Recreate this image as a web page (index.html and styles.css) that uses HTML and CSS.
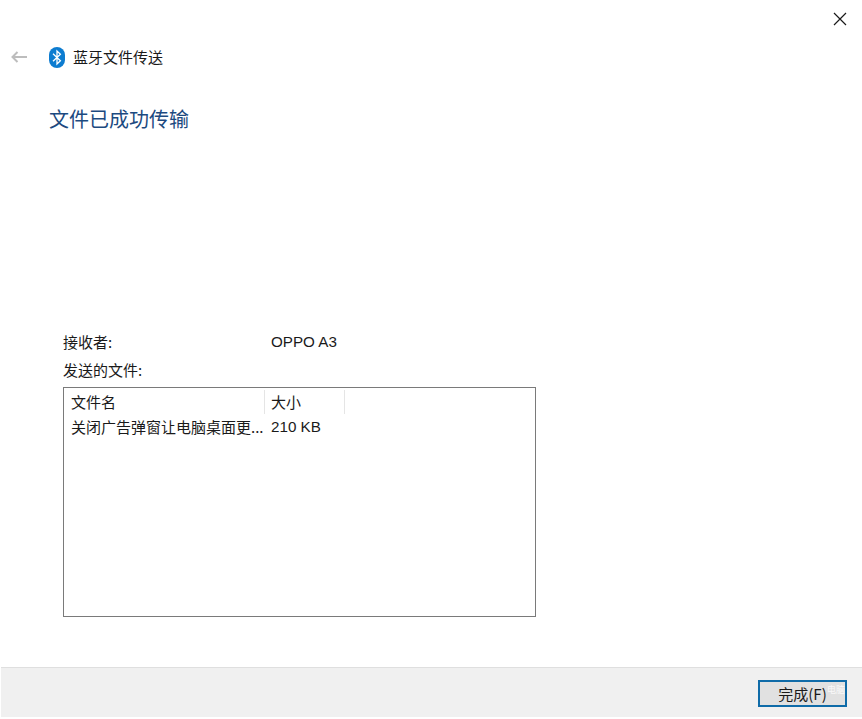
FILE: index.html
```html
<!DOCTYPE html>
<html lang="zh-CN">
<head>
<meta charset="utf-8">
<title>蓝牙文件传送</title>
<link rel="stylesheet" href="styles.css">
</head>
<body>
<div class="window">
  <div class="close-row">
    <svg class="close" width="14" height="14" viewBox="0 0 14 14"><path d="M1 1L13 13M13 1L1 13" stroke="#1a1a1a" stroke-width="1.2" fill="none"/></svg>
  </div>
  <header class="titlebar">
    <svg class="back" width="16" height="12" viewBox="0 0 16 12"><path d="M6.5 1L1.5 6L6.5 11M1.5 6H16" stroke="#bdbdbd" stroke-width="2" fill="none"/></svg>
    <svg class="bt" width="16" height="21" viewBox="0 0 16 21"><rect x="0" y="0" width="16" height="21" rx="8" fill="#0d7cd0"/><path d="M4 6.8L11.4 13.8L8 17V4L11.4 7.2L4 14.2" stroke="#fff" stroke-width="1.3" fill="none"/></svg>
    <span class="app-title">蓝牙文件传送</span>
  </header>
  <h1 class="heading">文件已成功传输</h1>
  <main class="details">
    <div class="row-recipient">
      <span class="label">接收者:</span>
      <span class="value">OPPO A3</span>
    </div>
    <div class="label sent">发送的文件:</div>
    <div class="listbox">
      <div class="list-head">
        <span class="col-name">文件名</span>
        <span class="col-size">大小</span>
      </div>
      <div class="list-row">
        <span class="col-name">关闭广告弹窗让电脑桌面更...</span>
        <span class="col-size">210 KB</span>
      </div>
    </div>
  </main>
  <footer class="footer">
    <button class="finish"><span class="finish-text">完成(F)</span><span class="mark">电脑</span></button>
  </footer>
</div>
</body>
</html>
```
FILE: styles.css
```css
html, body { margin: 0; padding: 0; background: #fff; }
body { width: 862px; height: 719px; overflow: hidden; font-family: "Noto Sans CJK SC", "Liberation Sans", sans-serif; color: #1a1a1a; }
.window { display: flex; flex-direction: column; height: 719px; }
.close-row { display: flex; justify-content: flex-end; padding: 12px 15px 0 0; height: 14px; }
.titlebar { display: flex; align-items: center; height: 22px; margin-top: 20px; padding-left: 11px; }
.back { margin-right: 22px; }
.bt { margin-right: 8px; }
.app-title { font-size: 15px; line-height: 22px; }
.heading { margin: 36px 0 0 49px; font-size: 20px; font-weight: 400; line-height: 30px; color: #1c4a80; }
.details { margin: 197px 0 0 63px; font-size: 15px; }
.row-recipient { display: flex; height: 22px; line-height: 22px; }
.row-recipient .label { width: 208px; }
.value, .col-size { font-family: "Liberation Sans", "Noto Sans CJK SC", sans-serif; font-size: 15.2px; }
.sent { margin-top: 6px; height: 22px; line-height: 22px; }
.listbox { box-sizing: border-box; width: 473px; height: 230px; margin-top: 6px; border: 1px solid #7a7a7a; }
.list-head, .list-row { display: flex; line-height: 24px; height: 24px; }
.list-head { margin-top: 2px; }
.list-row { margin-top: 1px; }
.col-name { box-sizing: border-box; width: 201px; padding-left: 7px; white-space: nowrap; }
.col-size { box-sizing: border-box; width: 80px; padding-left: 6px; }
.list-head .col-name, .list-head .col-size { border-right: 1px solid #e5e5e5; }
.list-head .col-size { font-family: "Noto Sans CJK SC", sans-serif; font-size: 15px; }
.footer { box-sizing: border-box; display: flex; justify-content: flex-end; align-items: flex-start; margin-top: 50px; margin-left: 1px; height: 50px; background: #f0f0f0; border-top: 1px solid #dfdfdf; padding: 12px 15px 0 0; }
.finish { position: relative; box-sizing: border-box; width: 89px; height: 27px; padding: 0; background: #e1e1e1; border: 2px solid #0f6ba8; font-family: "Noto Sans CJK SC", sans-serif; font-size: 15px; line-height: 22px; color: #1a1a1a; }
.mark { position: absolute; right: 0; top: 2px; font-size: 9px; line-height: 12px; color: rgba(255,255,255,.8); }
```
